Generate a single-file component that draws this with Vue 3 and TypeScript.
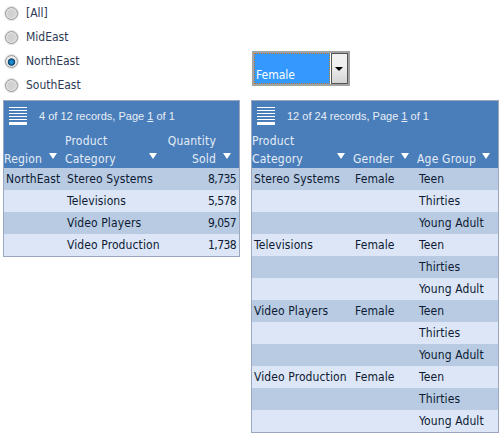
<script setup lang="ts">
interface Col {
  label: string[]
  width: number
  right?: boolean
}

const regions = ['[All]', 'MidEast', 'NorthEast', 'SouthEast']
const selected = 'NorthEast'

const leftCols: Col[] = [
  { label: ['Region'], width: 61 },
  { label: ['Product', 'Category'], width: 100 },
  { label: ['Quantity', 'Sold'], width: 74, right: true },
]
const leftRows = [
  ['NorthEast', 'Stereo Systems', '8,735'],
  ['', 'Televisions', '5,578'],
  ['', 'Video Players', '9,057'],
  ['', 'Video Production', '1,738'],
]

const rightCols: Col[] = [
  { label: ['Product', 'Category'], width: 101 },
  { label: ['Gender'], width: 64 },
  { label: ['Age Group'], width: 81 },
]
const products = ['Stereo Systems', 'Televisions', 'Video Players', 'Video Production']
const rightRows: string[][] = []
for (const p of products) {
  rightRows.push([p, 'Female', 'Teen'])
  rightRows.push(['', '', 'Thirties'])
  rightRows.push(['', '', 'Young Adult'])
}

const reports = [
  { info: '4 of 12 records, Page ', cols: leftCols, rows: leftRows },
  { info: '12 of 24 records, Page ', cols: rightCols, rows: rightRows },
]
</script>

<template>
  <div class="page">
    <div class="column left">
      <div class="radios">
        <div v-for="r in regions" :key="r" class="radio-row">
          <span class="radio" :class="{ on: r === selected }"></span>
          <span>{{ r }}</span>
        </div>
      </div>
      <div class="report report-left">
        <div class="toolbar">
          <svg class="menu" width="18" height="19" viewBox="0 0 18 19">
            <path d="M0 .5h18M0 3.5h18M0 6.5h18M0 9.5h18M0 12.5h18" stroke="#fff" fill="none" />
            <rect x="0" y="15" width="18" height="3" fill="#fff" />
          </svg>
          <span>{{ reports[0].info }}<u>1</u> of 1</span>
        </div>
        <table>
          <thead>
            <tr>
              <th v-for="c in reports[0].cols" :key="c.width" :style="{ width: c.width + 'px' }" :class="{ right: c.right }">
                <div class="th-wrap">
                  <span class="th-text"><template v-for="(l, i) in c.label" :key="l"><br v-if="i" />{{ l }}</template></span>
                  <span class="arrow"></span>
                </div>
              </th>
            </tr>
          </thead>
          <tbody>
            <tr v-for="(row, i) in reports[0].rows" :key="i">
              <td v-for="(v, j) in row" :key="j" :class="{ right: reports[0].cols[j].right }">{{ v }}</td>
            </tr>
          </tbody>
        </table>
      </div>
    </div>

    <div class="column">
      <div class="select">
        <div class="select-value"><span>Female</span></div>
        <div class="select-btn"></div>
      </div>
      <div class="report report-right">
        <div class="toolbar">
          <svg class="menu" width="18" height="19" viewBox="0 0 18 19">
            <path d="M0 .5h18M0 3.5h18M0 6.5h18M0 9.5h18M0 12.5h18" stroke="#fff" fill="none" />
            <rect x="0" y="15" width="18" height="3" fill="#fff" />
          </svg>
          <span>{{ reports[1].info }}<u>1</u> of 1</span>
        </div>
        <table>
          <thead>
            <tr>
              <th v-for="c in reports[1].cols" :key="c.width" :style="{ width: c.width + 'px' }">
                <div class="th-wrap">
                  <span class="th-text"><template v-for="(l, i) in c.label" :key="l"><br v-if="i" />{{ l }}</template></span>
                  <span class="arrow"></span>
                </div>
              </th>
            </tr>
          </thead>
          <tbody>
            <tr v-for="(row, i) in reports[1].rows" :key="i">
              <td v-for="(v, j) in row" :key="j">{{ v }}</td>
            </tr>
          </tbody>
        </table>
      </div>
    </div>
  </div>
</template>

<style>
html,
body {
  background: #fff;
}
</style>

<style scoped>
.page {
  display: flex;
  gap: 11px;
  width: 503px;
  height: 435px;
  padding-left: 3px;
  box-sizing: border-box;
  overflow: hidden;
  font-family: "DejaVu Sans Condensed", "DejaVu Sans", sans-serif;
  font-size: 12px;
  color: #0c1a33;
}
.column {
  display: flex;
  flex-direction: column;
}
.left {
  width: 237px;
}
.radios {
  box-sizing: border-box;
  height: 100px;
  padding-top: 1px;
}
.radio-row {
  display: flex;
  align-items: center;
  gap: 8px;
  height: 24px;
  padding-left: 2px;
  color: #2d3a55;
}
.radio {
  box-sizing: border-box;
  width: 13px;
  height: 13px;
  border-radius: 50%;
  border: 1px solid #969696;
  box-shadow: 0 0 0 1px #e4e4e4;
  background: radial-gradient(circle at 50% 50%, #d2d2d2 0 45%, #e6e6e6 70%, #f6f6f6 100%);
}
.radio.on {
  background: radial-gradient(circle at 50% 55%, #1b8ed0 0 18%, #0b3e6c 40%, #e6e6e6 50%, #f4f4f4 100%);
}
.select {
  display: flex;
  box-sizing: border-box;
  width: 98px;
  height: 35px;
  margin-top: 51px;
  margin-bottom: 14px;
  margin-left: 1px;
  border: 2px solid #a3a3a3;
  background: #fff;
}
.select-value {
  flex: 1;
  display: flex;
  align-items: flex-end;
  margin: 0 1px 0 0;
  padding: 0 0 1px 1px;
  background: #3399ff;
  border: 1px dotted #c77d2a;
  color: #fff;
}
.select-btn {
  position: relative;
  width: 15px;
  border: 1px solid #555;
  background: linear-gradient(#f2f2f2, #f0f0f0 40%, #d4d4d4);
}
.select-btn::after {
  content: "";
  position: absolute;
  left: 3px;
  top: 13px;
  border-left: 4px solid transparent;
  border-right: 4px solid transparent;
  border-top: 4px solid #000;
}
.report {
  border: 1px solid #9ba6bf;
  background: #4a7eba;
}
.report-left {
  width: 235px;
}
.report-right {
  width: 246px;
}
.toolbar {
  display: flex;
  align-items: center;
  gap: 12px;
  height: 30px;
  padding-left: 5px;
  font-family: "Liberation Sans", Arial, sans-serif;
  font-size: 11px;
  color: #e6edf6;
}
.menu {
  flex: none;
}
table {
  width: 100%;
  border-collapse: collapse;
  table-layout: fixed;
}
th {
  height: 37px;
  padding: 0;
  font-weight: normal;
  text-align: left;
  vertical-align: bottom;
  color: #e4ecf7;
  line-height: 18px;
  letter-spacing: 0.2px;
}
.th-wrap {
  display: flex;
  align-items: flex-end;
  justify-content: space-between;
  padding-right: 8px;
}
th.right .th-text {
  flex: 1;
  text-align: right;
  padding-right: 7px;
}
.arrow {
  flex: none;
  margin-bottom: 9px;
  border-left: 4px solid transparent;
  border-right: 4px solid transparent;
  border-top: 6px solid #fff;
}
td {
  height: 22px;
  padding: 0 2px;
  white-space: nowrap;
  overflow: visible;
  letter-spacing: 0.1px;
}
td.right {
  padding-right: 3px;
  text-align: right;
  letter-spacing: -0.6px;
}
tbody tr:nth-child(odd) {
  background: #b8cbe2;
}
tbody tr:nth-child(even) {
  background: #dde6f6;
}
</style>
